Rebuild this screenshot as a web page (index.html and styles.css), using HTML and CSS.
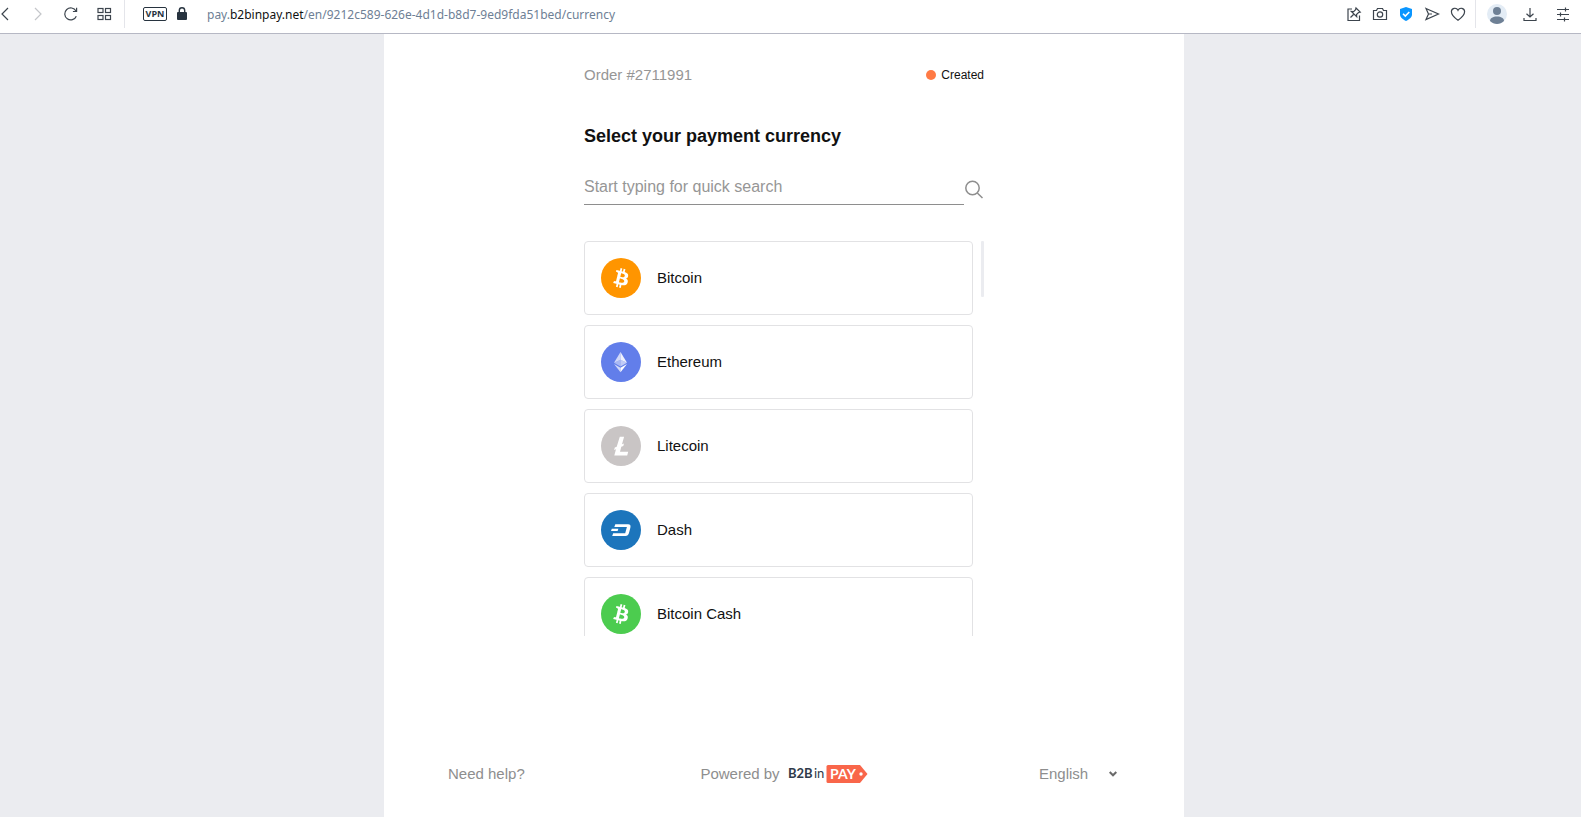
FILE: index.html
```html
<!DOCTYPE html>
<html lang="en">
<head>
    <meta charset="UTF-8">
    <meta name="viewport" content="width=device-width, initial-scale=1.0">
    <title>B2BinPay</title>
    <link rel="stylesheet" href="styles.css">
</head>
<body>
    <header class="toolbar">
        <div class="nav-buttons">
            <button aria-label="Back"><svg width="16" height="16" viewBox="0 0 16 16"><path d="M11 2L5 8l6 6"/></svg></button>
            <button class="disabled" aria-label="Forward"><svg width="16" height="16" viewBox="0 0 16 16"><path d="M5 2l6 6-6 6"/></svg></button>
            <button aria-label="Reload"><svg width="16" height="16" viewBox="0 0 16 16"><path d="M13.3 10.2A6 6 0 1 1 13 5M13.6 1.8v3.7H9.9"/></svg></button>
            <button aria-label="Speed dial"><svg width="16" height="16" viewBox="0 0 16 16"><rect x="2" y="2.500" width="5" height="4"/><rect x="9.500" y="2.500" width="5" height="4"/><rect x="2" y="9.500" width="5" height="4"/><rect x="9.500" y="9.500" width="5" height="4"/></svg></button>
        </div>
        <span class="divider"></span>
        <button class="vpn">VPN</button>
        <svg class="lock" width="10" height="14" viewBox="0 0 10 14"><rect x="0" y="5" width="10" height="8" rx="1" fill="#27333f"/><path d="M2.300 5.500V3.500a2.700 2.700 0 0 1 5.400 0v2" fill="none" stroke="#27333f" stroke-width="1.400"/></svg>
        <div class="address">pay.<span>b2binpay.net</span>/en/9212c589-626e-4d1d-b8d7-9ed9fda51bed/currency</div>
        <div class="page-buttons">
            <button aria-label="Easy setup"><svg width="16" height="16" viewBox="0 0 16 16"><path d="M6 3H2v11.500h11.500V9.500M4.500 11.500l3-3M10 2l4.200 4.200-1.700.3-2 2 .2 2.200-5.400-5.200 2.300.1 2-2z"/></svg></button>
            <button aria-label="Snapshot"><svg width="16" height="16" viewBox="0 0 16 16"><path d="M1.500 4.500h3l1-2h5l1 2h3v9h-13z"/><circle cx="8" cy="8.500" r="2.700"/></svg></button>
            <button aria-label="Protection"><svg width="16" height="16" viewBox="0 0 16 16"><path d="M8 1l6 2v5.500c0 3-3 5-6 6.500-3-1.500-6-3.500-6-6.500V3z" fill="#0a96ff" stroke="none"/><path d="M5 7.700l2.300 2.300 4-4" stroke="#fff" stroke-width="1.600"/></svg></button>
            <button aria-label="Send"><svg width="16" height="16" viewBox="0 0 16 16"><path d="M2 2.500L14.500 8 2 13.500 4.500 8z M4.500 8H8"/></svg></button>
            <button aria-label="Bookmark"><svg width="16" height="16" viewBox="0 0 16 16"><path d="M8 14.300C4 11.500 1.400 9 1.400 5.800c0-4 5-4.700 6.600-1.500 1.600-3.200 6.600-2.500 6.600 1.500 0 3.200-2.600 5.700-6.600 8.500z"/></svg></button>
        </div>
        <span class="divider"></span>
        <div class="nav-buttons">
            <button aria-label="Profile"><svg width="20" height="20" viewBox="0 0 20 20"><circle cx="10" cy="10" r="10" fill="#e3ecf5" stroke="none"/><circle cx="10" cy="7" r="4" fill="#6e8095" stroke="none"/><path d="M3 17c0-3 3-4.500 7-4.500s7 1.500 7 4.500c-4 4-10 4-14 0z" fill="#6e8095" stroke="none"/></svg></button>
            <button aria-label="Downloads"><svg width="16" height="16" viewBox="0 0 16 16"><path d="M8 2v9M4.500 7.700L8 11l3.500-3.300M2 12v2.500h12V12"/></svg></button>
            <button aria-label="Menu"><svg width="16" height="16" viewBox="0 0 16 16"><path d="M2 3.500h12M2 8.500h12M2 13.500h12M10.500 1.500v4M5.500 6.500v4M9.500 11.500v4"/></svg></button>
        </div>
    </header>

    <main class="page">
        <div class="panel">
            <div class="content">
                <div class="order">
                    <span>Order #2711991</span>
                    <span class="status">Created</span>
                </div>
                <h1>Select your payment currency</h1>
                <form class="search">
                    <input type="text" placeholder="Start typing for quick search" aria-label="Search currency">
                    <svg width="20" height="20" viewBox="0 0 20 20"><circle cx="8.500" cy="9" r="6.700"/><path d="M13.300 14l5.200 5"/></svg>
                </form>
                <div class="list-container">
                    <div class="currency-list">
                        <button class="currency">
                            <svg width="40" height="40" viewBox="0 0 40 40"><circle cx="20" cy="20" r="20" fill="#ff9500"/><path transform="translate(4 4)" fill="#fff" d="M23.189 14.020c.314-2.096-1.283-3.223-3.465-3.975l.708-2.840-1.728-.43-.69 2.765c-.454-.114-.92-.22-1.385-.326l.695-2.783L15.596 6l-.708 2.839c-.376-.086-.746-.17-1.104-.26l.002-.009-2.384-.595-.46 1.846s1.283.294 1.256.312c.7.175.826.638.805 1.006l-.806 3.235c.048.012.11.03.18.057l-.183-.045-1.130 4.532c-.086.212-.303.531-.793.41.018.025-1.256-.313-1.256-.313l-.858 1.978 2.250.561c.418.105.828.215 1.231.318l-.715 2.872 1.727.43.708-2.840c.472.127.93.245 1.378.357l-.706 2.828 1.728.43.715-2.866c2.948.558 5.164.333 6.097-2.333.752-2.146-.037-3.385-1.588-4.192 1.130-.26 1.980-1.003 2.207-2.538zm-3.950 5.538c-.533 2.147-4.148.986-5.320.695l.95-3.805c1.172.293 4.929.872 4.370 3.110zm.535-5.569c-.487 1.953-3.495.96-4.470.717l.86-3.450c.975.243 4.118.696 3.610 2.733z"/></svg>
                            Bitcoin
                        </button>
                        <button class="currency">
                            <svg width="40" height="40" viewBox="0 0 40 40"><circle cx="20" cy="20" r="20" fill="#627eea"/><g fill="#fff"><path opacity=".7" d="M19.500 10L13 20.700l6.500-2.900z"/><path opacity=".9" d="M19.500 10L26 20.700l-6.500-2.900z"/><path opacity=".45" d="M13 20.700l6.500-2.900v6.700z"/><path opacity=".6" d="M26 20.700l-6.500-2.900v6.700z"/><path opacity=".7" d="M13 22l6.500 3.800v4.500z"/><path d="M26 22l-6.500 3.800v4.500z"/></g></svg>
                            Ethereum
                        </button>
                        <button class="currency">
                            <svg width="40" height="40" viewBox="0 0 40 40"><circle cx="20" cy="20" r="20" fill="#c9c5c5"/><path fill="#fff" d="M18.800 10.700h4.300l-2.100 7.600 2-.8-.7 2.500-2 .8-1.300 4.900h8.200l-1 3.900H13.300l1.700-6.300-1.900.8.700-2.500 1.900-.8z"/></svg>
                            Litecoin
                        </button>
                        <button class="currency">
                            <svg width="40" height="40" viewBox="0 0 40 40"><circle cx="20" cy="20" r="20" fill="#1c75bc"/><path fill="#fff" d="M14.300 14.200h12.800q3 0 2.300 3.200l-1.400 5.600q-.8 3-3.500 3H11.200l1-2.800h12l1.700-6.200H13.300zM10.800 18.800h6.600l-.8 2.200h-6.600z"/></svg>
                            Dash
                        </button>
                        <button class="currency">
                            <svg width="40" height="40" viewBox="0 0 40 40"><circle cx="20" cy="20" r="20" fill="#4ccc4f"/><path transform="translate(4 4)" fill="#fff" d="M23.189 14.020c.314-2.096-1.283-3.223-3.465-3.975l.708-2.840-1.728-.43-.69 2.765c-.454-.114-.92-.22-1.385-.326l.695-2.783L15.596 6l-.708 2.839c-.376-.086-.746-.17-1.104-.26l.002-.009-2.384-.595-.46 1.846s1.283.294 1.256.312c.7.175.826.638.805 1.006l-.806 3.235c.048.012.11.03.18.057l-.183-.045-1.130 4.532c-.086.212-.303.531-.793.41.018.025-1.256-.313-1.256-.313l-.858 1.978 2.250.561c.418.105.828.215 1.231.318l-.715 2.872 1.727.43.708-2.840c.472.127.93.245 1.378.357l-.706 2.828 1.728.43.715-2.866c2.948.558 5.164.333 6.097-2.333.752-2.146-.037-3.385-1.588-4.192 1.130-.26 1.980-1.003 2.207-2.538zm-3.950 5.538c-.533 2.147-4.148.986-5.320.695l.95-3.805c1.172.293 4.929.872 4.370 3.110zm.535-5.569c-.487 1.953-3.495.96-4.470.717l.86-3.450c.975.243 4.118.696 3.610 2.733z"/></svg>
                            Bitcoin Cash
                        </button>
                    </div>
                    <div class="scroll-thumb"></div>
                </div>
            </div>
            <footer class="footer">
                <a href="#">Need help?</a>
                <a href="#" class="powered">Powered by
                    <svg class="logo" width="80" height="20" viewBox="0 0 80 20">
                        <text x="0" y="14" font-weight="700" fill="#2f3a4a">B2B</text>
                        <text x="26" y="14" fill="#2f3a4a">in</text>
                        <path d="M40 1h32l7.500 9-7.500 9H40a1.500 1.500 0 0 1-1.500-1.500v-15A1.500 1.500 0 0 1 40 1z" fill="#f9664a"/>
                        <text x="42" y="15" font-size="14" font-weight="700" fill="#fff">PAY</text>
                        <circle cx="73" cy="10" r="1.700" fill="#fff"/>
                    </svg>
                </a>
                <div class="language">
                    <select aria-label="Language">
                        <option>English</option>
                    </select>
                    <svg width="8" height="6" viewBox="0 0 8 6"><path d="M.7 1L4 4.300 7.300 1" fill="none" stroke="#6a6a6a" stroke-width="2"/></svg>
                </div>
            </footer>
        </div>
    </main>
</body>
</html>
```
FILE: styles.css
```css
* {
    box-sizing: border-box;
}
body {
    font-family: "Liberation Sans", Arial, sans-serif;
    font-size: 15px;
    color: #111;
    background-color: #ebecf0;
    margin: 0;
    min-height: 100vh;
    display: flex;
    flex-direction: column;
}
button, input, select {
    font: inherit;
    color: inherit;
    background: none;
    border: none;
    padding: 0;
    margin: 0;
}
button {
    cursor: pointer;
}
a {
    color: inherit;
    text-decoration: none;
}
.toolbar {
    display: flex;
    align-items: center;
    height: 34px;
    padding: 0 2px 5px 0;
    background-color: #fff;
    border-bottom: 1px solid #b6b8c4;
    overflow: hidden;
}
.toolbar svg {
    flex: none;
}
.nav-buttons, .page-buttons {
    display: flex;
}
.nav-buttons:first-child {
    margin-left: -12px;
}
.nav-buttons button, .page-buttons button {
    display: flex;
    align-items: center;
    justify-content: center;
    width: 33px;
    height: 28px;
    fill: none;
    stroke: #3c444d;
    stroke-width: 1.2;
}
.page-buttons button {
    width: 26px;
}
.nav-buttons .disabled {
    stroke: #c4c6ca;
}
.divider {
    width: 1px;
    height: 28px;
    margin: 0 4px;
    background-color: #e4e5ea;
}
.vpn {
    width: 24px;
    height: 14px;
    margin-left: 14px;
    border: 1px solid #27333f;
    border-radius: 2px;
    color: #27333f;
    font-family: "Open Sans", sans-serif;
    font-size: 9px;
    font-weight: 700;
    line-height: 12px;
}
.lock {
    margin-left: 10px;
}
.address {
    flex: 1;
    margin-left: 20px;
    color: #6e8095;
    font-family: "Noto Sans", "Open Sans", sans-serif;
    font-size: 12px;
    white-space: nowrap;
}
.address span {
    color: #111;
}
.page {
    flex: 1;
    display: flex;
    justify-content: center;
    padding-right: 13px;
}
.panel {
    display: flex;
    flex-direction: column;
    justify-content: space-between;
    width: 100%;
    max-width: 800px;
    background-color: #fff;
}
.content {
    width: 100%;
    max-width: 400px;
    margin: 0 auto;
    padding-top: 31px;
}
.order {
    display: flex;
    justify-content: space-between;
    align-items: flex-end;
    line-height: 20px;
    color: #969696;
}
.status {
    display: flex;
    align-items: center;
    gap: 5px;
    font-size: 12px;
    color: #111;
}
.status::before {
    content: "";
    width: 10px;
    height: 10px;
    border-radius: 50%;
    background-color: #ff7a45;
}
h1 {
    margin: 40px 0 26px;
    font-size: 18px;
    line-height: 22px;
}
.search {
    display: flex;
    align-items: center;
}
.search input {
    flex: 1;
    min-width: 0;
    height: 32px;
    padding-bottom: 4px;
    border-bottom: 1px solid #8e8e8e;
    font-size: 16px;
    outline: none;
}
.search input::placeholder {
    color: #969696;
}
.search svg {
    fill: none;
    stroke: #8e8e8e;
    stroke-width: 1.5;
}
.list-container {
    display: flex;
    gap: 8px;
    height: 395px;
    margin-top: 36px;
}
.currency-list {
    flex: 1;
    display: flex;
    flex-direction: column;
    gap: 10px;
    overflow: hidden;
}
.currency {
    flex: none;
    display: flex;
    align-items: center;
    gap: 16px;
    height: 74px;
    padding: 0 16px;
    border: 1px solid #e2e2e4;
    border-radius: 4px;
    line-height: 16px;
}
.currency:hover {
    border-color: #969696;
}
.scroll-thumb {
    width: 3px;
    height: 56px;
    border-radius: 1px;
    background-color: #ebecf0;
}
.footer {
    display: grid;
    grid-template-columns: 1fr auto 1fr;
    align-items: center;
    padding: 0 64px 33px;
    line-height: 20px;
    color: #8e8e8e;
}
.powered {
    display: flex;
    align-items: center;
    gap: 8px;
}
.logo {
    font-family: Lato, sans-serif;
    font-size: 13px;
}
.language {
    display: flex;
    align-items: center;
    justify-content: flex-end;
    gap: 20px;
    padding-right: 3px;
}
.language select {
    appearance: none;
}
```
